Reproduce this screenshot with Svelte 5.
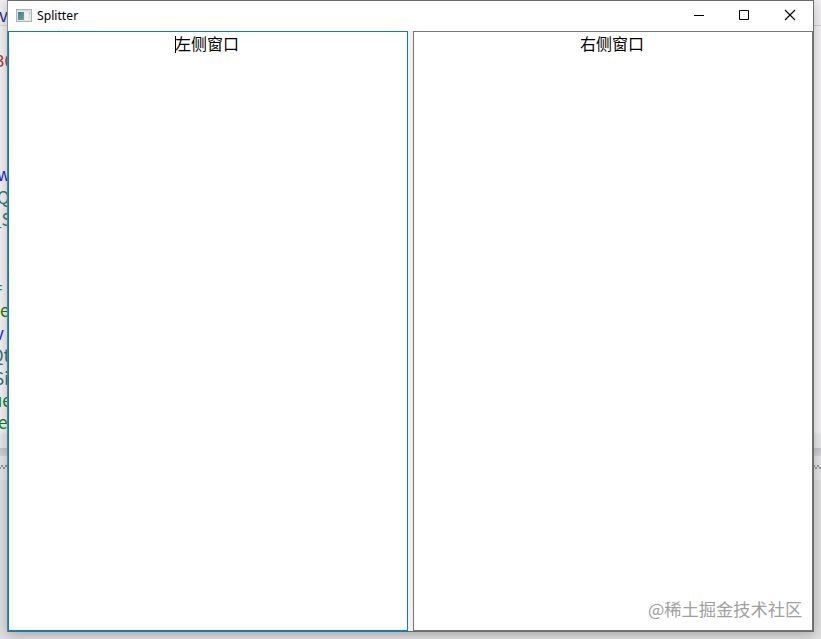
<script>
  const fragments = [
    { text: 'v', top: 5, left: -1, color: '#26268c' },
    { text: '30', top: 50, left: -5, color: '#a33c44' },
    { text: 'w', top: 164, left: -3, color: '#2020dd' },
    { text: 'Q', top: 187, left: -3, color: '#377b7b' },
    { text: '_S', top: 209, left: -8, color: '#377b7b' },
    { text: '=', top: 277, left: -7, color: '#159070' },
    { text: 'e', top: 300, left: 0, color: '#168016' },
    { text: 'v', top: 323, left: -5, color: '#2020dd' },
    { text: 'Qt', top: 345, left: -9, color: '#3c6f80' },
    { text: 'Si', top: 368, left: -6, color: '#3c6f80' },
    { text: 'ue', top: 390, left: -8, color: '#168016' },
    { text: 'e', top: 412, left: -2, color: '#168016' }
  ];
</script>

<div class="desktop">
  <div class="editor">
    <div class="tabs"></div>
    <div class="code"></div>
    <div class="divider"></div>
    <div class="grip"></div>
    <div class="panel"></div>
  </div>
  {#each fragments as f}
    <span class="fragment" style="top: {f.top}px; left: {f.left}px; color: {f.color}">{f.text}</span>
  {/each}
  <main class="window">
    <header>
      <svg class="app-icon" width="16" height="13" viewBox="0 0 16 13">
        <defs>
          <linearGradient id="screen" x1="0" y1="0" x2="1" y2="1">
            <stop offset="0" stop-color="#47758c" />
            <stop offset="1" stop-color="#63b08c" />
          </linearGradient>
        </defs>
        <rect x=".5" y=".5" width="15" height="12" fill="#e3e7e7" stroke="#adb1b1" />
        <path d="M1 1.5h14" stroke="#d5dada" />
        <rect x="2" y="3" width="6" height="8" fill="url(#screen)" />
        <path d="M9 3h3v8H9z" fill="#f0f2f2" />
        <path d="M13 3h1v3h-1z" fill="#bccbc9" />
      </svg>
      <h1>Splitter</h1>
      <div class="controls">
        <svg width="46" height="30" viewBox="0 0 46 30"><path d="M18 14.5h10" stroke="#000" fill="none" /></svg>
        <svg width="46" height="30" viewBox="0 0 46 30"><path d="M17.5 9.5h9v9h-9z" stroke="#000" fill="none" /></svg>
        <svg width="46" height="30" viewBox="0 0 46 30"><path d="M17 9l10 10M27 9l-10 10" stroke="#000" stroke-width="1.1" fill="none" /></svg>
      </div>
    </header>
    <section class="splitter">
      <div class="pane active"><i class="caret"></i>左侧窗口</div>
      <div class="handle"></div>
      <div class="pane">右侧窗口</div>
    </section>
  </main>
  <span class="watermark">@稀土掘金技术社区</span>
</div>

<style>
  :global(body) { margin: 0; }
  .desktop {
    position: relative;
    width: 821px;
    height: 639px;
    overflow: hidden;
    box-sizing: border-box;
    padding-left: 7px;
    background: #dcdcde;
    font-family: "Noto Sans CJK SC", sans-serif;
  }
  .editor {
    position: absolute;
    inset: 0;
    display: flex;
    flex-direction: column;
  }
  .tabs { height: 25px; background: #f2f0f2; border-bottom: 1px solid #d6d4d8; }
  .code { height: 422px; background: linear-gradient(#f4f2f5 96%, #e8e8ea 97%); }
  .divider { height: 8px; background: linear-gradient(#c6c6ce, #d6d6dc); }
  .grip {
    height: 24px;
    background: radial-gradient(circle, #96969b 0.8px, transparent 1px) 0 8px / 4px 4px repeat-x,
      radial-gradient(circle, #96969b 0.8px, transparent 1px) 2px 10px / 4px 4px repeat-x, #e6e6e8;
  }
  .panel { flex: 1; background: #e0e0e1; }
  .fragment {
    position: absolute;
    font-size: 17px;
    line-height: 20px;
    white-space: nowrap;
  }
  .window {
    position: relative;
    display: flex;
    flex-direction: column;
    box-sizing: border-box;
    width: 807px;
    height: 632px;
    border: 1px solid #6b6b6b;
    border-left-color: #8c9296;
    background: #fff;
    box-shadow: 0 3px 12px rgba(0, 0, 0, 0.25);
  }
  header {
    display: flex;
    align-items: center;
    height: 30px;
    flex: none;
    box-sizing: border-box;
    padding-left: 8px;
  }
  .app-icon { margin-top: -2px; }
  h1 {
    margin: 0 0 0 5px;
    font-family: "Noto Sans", sans-serif;
    font-size: 12.2px;
    line-height: 18px;
    font-weight: 400;
    color: #000;
  }
  .controls { display: flex; margin-left: auto; margin-right: -1px; }
  .splitter {
    flex: 1;
    display: grid;
    grid-template-columns: 400px 5px 400px;
  }
  .pane {
    box-sizing: border-box;
    border: 1px solid #757575;
    padding: 1px 2px 0 0;
    text-align: center;
    font-size: 16px;
    line-height: 21px;
    color: #000;
  }
  .active {
    border-color: #0c80ac;
    box-shadow: -1px 0 #4a819c, 0 1px #3a6f9c;
  }
  .caret {
    display: inline-block;
    width: 1px;
    height: 17px;
    margin-right: -1px;
    background: #000;
    vertical-align: -3px;
  }
  .handle { background: #f0f0f0; }
  .watermark {
    position: absolute;
    left: 648px;
    top: 597px;
    font-size: 17.25px;
    line-height: 24px;
    color: #a0a0a0;
    white-space: nowrap;
  }
</style>
